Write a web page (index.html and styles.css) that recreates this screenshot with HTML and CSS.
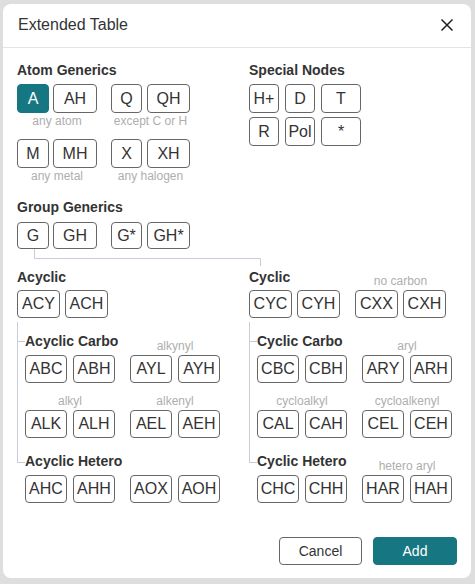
FILE: index.html
```html
<!DOCTYPE html>
<html>
<head>
<meta charset="utf-8">
<link rel="stylesheet" href="styles.css">
</head>
<body>
<div class="dialog">
  <header class="header">
    <span class="title">Extended Table</span>
    <button class="close" aria-label="Close">
      <svg width="14" height="14" viewBox="0 0 14 14"><path d="M1.5 1.5 L12.5 12.5 M12.5 1.5 L1.5 12.5" stroke="#222" stroke-width="1.5" fill="none"/></svg>
    </button>
  </header>
  <main class="content">
    <div class="top">
      <section class="col-left">
        <h3 class="heading top-heading">Atom Generics</h3>
        <div class="atom-grid">
          <div class="pair-group">
            <div class="pair g4"><button class="btn w32 selected">A</button><button class="btn w44">AH</button></div>
            <div class="caption">any atom</div>
          </div>
          <div class="pair-group">
            <div class="pair g5"><button class="btn w31">Q</button><button class="btn w43">QH</button></div>
            <div class="caption">except C or H</div>
          </div>
          <div class="pair-group">
            <div class="pair g4"><button class="btn w32">M</button><button class="btn w44">MH</button></div>
            <div class="caption">any metal</div>
          </div>
          <div class="pair-group">
            <div class="pair g5"><button class="btn w31">X</button><button class="btn w43">XH</button></div>
            <div class="caption">any halogen</div>
          </div>
        </div>
      </section>
      <section class="col-right">
        <h3 class="heading top-heading">Special Nodes</h3>
        <div class="special-grid">
          <button class="btn h29">H+</button>
          <button class="btn h29">D</button>
          <button class="btn h29">T</button>
          <button class="btn h29">R</button>
          <button class="btn h29">Pol</button>
          <button class="btn h29">*</button>
        </div>
      </section>
    </div>

    <section class="group-generics">
      <h3 class="heading gg-heading">Group Generics</h3>
      <div class="gg-row">
        <div class="pair g4"><button class="btn w32 h27">G</button><button class="btn w44 h27">GH</button></div>
        <div class="pair g5"><button class="btn w31 h27">G*</button><button class="btn w43 h27">GH*</button></div>
      </div>
    </section>

    <svg class="connector" width="250" height="17" viewBox="0 0 250 17">
      <path d="M17.5 0 V9.5 H243.5 V17" stroke="#c7cdd8" stroke-width="1" fill="none"/>
    </svg>

    <div class="tree">
      <section class="col-left">
        <div class="row3">
          <h3 class="heading head-main">Acyclic</h3>
          <div class="caption"></div>
        </div>
        <div class="row3 mt2">
          <div class="pair g5"><button class="btn w43">ACY</button><button class="btn w43">ACH</button></div>
        </div>
        <div class="subtree">
          <div class="branch carbo">
            <div class="row2">
              <h3 class="heading head-sub tick">Acyclic Carbo</h3>
              <div class="caption">alkynyl</div>
            </div>
            <div class="row2 mt2">
              <div class="pair g6"><button class="btn w42">ABC</button><button class="btn w42">ABH</button></div>
              <div class="pair g6"><button class="btn w42">AYL</button><button class="btn w42">AYH</button></div>
            </div>
            <div class="row2 mt11">
              <div class="caption">alkyl</div>
              <div class="caption">alkenyl</div>
            </div>
            <div class="row2 mt2">
              <div class="pair g6"><button class="btn w42">ALK</button><button class="btn w42">ALH</button></div>
              <div class="pair g6"><button class="btn w42">AEL</button><button class="btn w42">AEH</button></div>
            </div>
          </div>
          <div class="branch hetero">
            <div class="row2">
              <h3 class="heading head-sub elbow">Acyclic Hetero</h3>
              <div class="caption"></div>
            </div>
            <div class="row2 mt2">
              <div class="pair g6"><button class="btn w42">AHC</button><button class="btn w42">AHH</button></div>
              <div class="pair g6"><button class="btn w42">AOX</button><button class="btn w42">AOH</button></div>
            </div>
          </div>
        </div>
      </section>

      <section class="col-right">
        <div class="row3">
          <h3 class="heading head-main">Cyclic</h3>
          <div class="caption">no carbon</div>
        </div>
        <div class="row3 mt2">
          <div class="pair g5"><button class="btn w43">CYC</button><button class="btn w43">CYH</button></div>
          <div class="pair g5"><button class="btn w43">CXX</button><button class="btn w43">CXH</button></div>
        </div>
        <div class="subtree">
          <div class="branch carbo">
            <div class="row2">
              <h3 class="heading head-sub tick">Cyclic Carbo</h3>
              <div class="caption">aryl</div>
            </div>
            <div class="row2 mt2">
              <div class="pair g6"><button class="btn w42">CBC</button><button class="btn w42">CBH</button></div>
              <div class="pair g6"><button class="btn w42">ARY</button><button class="btn w42">ARH</button></div>
            </div>
            <div class="row2 mt11">
              <div class="caption">cycloalkyl</div>
              <div class="caption">cycloalkenyl</div>
            </div>
            <div class="row2 mt2">
              <div class="pair g6"><button class="btn w42">CAL</button><button class="btn w42">CAH</button></div>
              <div class="pair g6"><button class="btn w42">CEL</button><button class="btn w42">CEH</button></div>
            </div>
          </div>
          <div class="branch hetero">
            <div class="row2">
              <h3 class="heading head-sub elbow">Cyclic Hetero</h3>
              <div class="caption">hetero aryl</div>
            </div>
            <div class="row2 mt2">
              <div class="pair g6"><button class="btn w42">CHC</button><button class="btn w42">CHH</button></div>
              <div class="pair g6"><button class="btn w42">HAR</button><button class="btn w42">HAH</button></div>
            </div>
          </div>
        </div>
      </section>
    </div>
  </main>
  <footer class="footer">
    <button class="btn-cancel">Cancel</button>
    <button class="btn-add">Add</button>
  </footer>
</div>
</body>
</html>
```

FILE: styles.css
```css
html, body {
  margin: 0;
}
body {
  background: #dedede;
  padding: 4px 0 0 3px;
  font-family: "Liberation Sans", Arial, sans-serif;
  color: #333;
}
.dialog {
  width: 468px;
  height: 574px;
  background: #fff;
  border-radius: 8px;
  display: flex;
  flex-direction: column;
  box-sizing: border-box;
  overflow: hidden;
}
.header {
  height: 44px;
  box-sizing: border-box;
  border-bottom: 1px solid #e3e3e3;
  display: flex;
  align-items: center;
  justify-content: space-between;
  padding: 0 17px 1px 15px;
  flex: none;
}
.title {
  font-size: 16px;
  color: #333;
}
.close {
  width: 14px;
  height: 14px;
  border: 0;
  background: none;
  padding: 0;
  display: flex;
}
.content {
  padding: 14px 14px 0 14px;
}
.top {
  display: flex;
}
.col-left {
  width: 232px;
  flex: none;
}
.col-right {
  flex: 1;
}
.heading {
  margin: 0;
  font-size: 14px;
  font-weight: bold;
  line-height: 16px;
  color: #333;
  white-space: nowrap;
}
.top-heading {
  margin-bottom: 6px;
}
.gg-heading {
  margin-bottom: 7px;
}
.btn {
  box-sizing: border-box;
  height: 28px;
  border: 1px solid #666;
  border-radius: 4px;
  background: #fff;
  color: #333;
  font-family: "Liberation Sans", Arial, sans-serif;
  font-size: 16px;
  padding: 0;
  display: flex;
  align-items: center;
  justify-content: center;
  flex: none;
}
.btn.selected {
  background: #167782;
  border-color: #167782;
  color: #fff;
}
.h29 { height: 29px; }
.h27 { height: 27px; }
.w31 { width: 31px; }
.w32 { width: 32px; }
.w42 { width: 42px; }
.w43 { width: 43px; }
.w44 { width: 44px; }
.atom-grid .btn { height: 29px; }

.pair {
  display: flex;
}
.g4 { gap: 4px; }
.g5 { gap: 5px; }
.g6 { gap: 6px; }

.atom-grid {
  display: grid;
  grid-template-columns: 80px 79px;
  column-gap: 14px;
  row-gap: 11px;
}
.pair-group {
  display: flex;
  flex-direction: column;
}
.caption {
  font-size: 12px;
  line-height: 14px;
  height: 14px;
  color: #aeaeae;
  text-align: center;
  white-space: nowrap;
}
.pair-group .caption {
  margin-top: 1px;
}
.special-grid {
  display: grid;
  grid-template-columns: 30px 30px 40px;
  column-gap: 6px;
  row-gap: 4px;
}
.group-generics {
  margin-top: 16px;
}
.gg-row {
  display: flex;
  gap: 14px;
}
.connector {
  display: block;
}
.tree {
  display: flex;
  margin-top: 3px;
}
.row3 {
  display: grid;
  grid-template-columns: 91px 91px;
  column-gap: 15px;
  align-items: end;
}
.row2 {
  display: grid;
  grid-template-columns: 90px 90px;
  column-gap: 15px;
  align-items: end;
}
.head-main {
  margin-bottom: 3px;
}
.head-sub {
  margin-bottom: 4px;
  display: flex;
}
.mt2 { margin-top: 2px; }
.mt11 { margin-top: 11px; }
.subtree {
  margin-top: 4px;
}
.branch.carbo {
  border-left: 1px solid #c7cdd8;
  padding: 11px 0 15px 7px;
}
.branch.hetero {
  padding-left: 8px;
}
.tick::before {
  content: "";
  flex: none;
  width: 7px;
  margin-left: -7px;
  align-self: center;
  border-top: 1px solid #c7cdd8;
}
.elbow::before {
  content: "";
  flex: none;
  box-sizing: border-box;
  width: 8px;
  height: 10px;
  margin-left: -8px;
  align-self: flex-start;
  border-left: 1px solid #c7cdd8;
  border-bottom: 1px solid #c7cdd8;
}
.footer {
  margin-top: auto;
  display: flex;
  justify-content: flex-end;
  gap: 11px;
  padding: 0 14px 13px 0;
}
.btn-cancel, .btn-add {
  box-sizing: border-box;
  height: 28px;
  border-radius: 4px;
  font-family: "Liberation Sans", Arial, sans-serif;
  font-size: 14px;
  padding: 0;
}
.btn-cancel {
  width: 83px;
  border: 1px solid #666;
  background: #fff;
  color: #333;
}
.btn-add {
  width: 84px;
  border: 1px solid #167782;
  background: #167782;
  color: #fff;
}
```
